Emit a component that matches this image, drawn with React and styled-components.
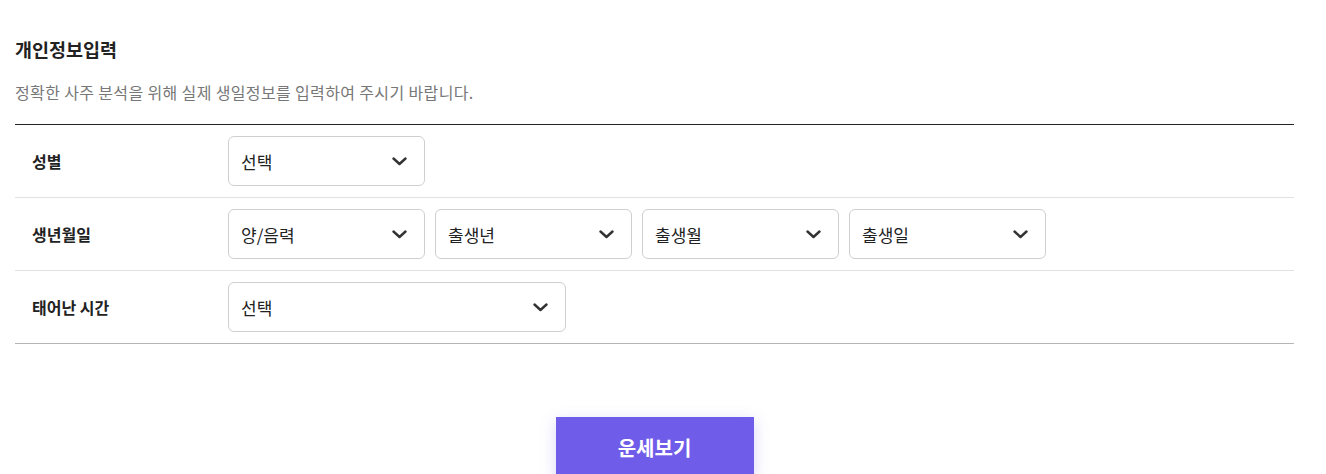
import React from 'react'
import styled, { createGlobalStyle } from 'styled-components'

const GlobalStyle = createGlobalStyle`
  body {
    margin: 0;
    background: #fff;
    font-family: "Noto Sans CJK KR", "Noto Sans", sans-serif;
    color: #222;
  }
`

const Container = styled.div`
  width: 1279px;
  margin-left: 15px;
  padding-top: 36px;
  display: flex;
  flex-direction: column;
`

const Title = styled.h2`
  margin: 0;
  font-size: 18.5px;
  line-height: 27px;
  font-weight: 700;
  color: #222;
`

const Desc = styled.p`
  margin: 18px 0 21px;
  font-size: 16px;
  line-height: 22px;
  letter-spacing: 0.36px;
  color: #777;
`

const Table = styled.div`
  border-top: 1px solid #222;
  border-bottom: 1px solid #b5b5b5;
`

const Row = styled.div`
  display: flex;
  align-items: center;
  min-height: 72px;
  border-top: ${p => (p.first ? 'none' : '1px solid #e2e2e2')};
`

const Label = styled.div`
  width: 213px;
  padding-left: 17px;
  box-sizing: border-box;
  font-size: 16px;
  font-weight: 700;
  color: #222;
`

const Fields = styled.div`
  display: flex;
  gap: 10px;
`

const Select = styled.div`
  width: ${p => p.w || 197}px;
  height: 50px;
  box-sizing: border-box;
  border: 1px solid #cfcfcf;
  border-radius: 6px;
  display: flex;
  align-items: center;
  justify-content: space-between;
  padding: 0 17px 0 12px;
  font-size: 17px;
  color: #222;
  background: #fff;
`

const Chevron = () => (
  <svg width="15" height="9" viewBox="0 0 15 9" fill="none">
    <path d="M1.5 1.5L7.5 7L13.5 1.5" stroke="#333" strokeWidth="2.4" strokeLinecap="round" strokeLinejoin="round" />
  </svg>
)

const Dropdown = ({ text, w }) => (
  <Select w={w}>
    <span>{text}</span>
    <Chevron />
  </Select>
)

const ButtonWrap = styled.div`
  display: flex;
  justify-content: center;
  margin-top: 73px;
`

const Submit = styled.button`
  width: 198px;
  height: 60px;
  border: none;
  background: #6f5ce9;
  color: #fff;
  font-family: inherit;
  font-size: 20px;
  font-weight: 700;
  box-shadow: 0 4px 14px rgba(111, 92, 233, 0.25);
  cursor: pointer;
`

export default function App() {
  return (
    <>
      <GlobalStyle />
      <Container>
        <Title>개인정보입력</Title>
        <Desc>정확한 사주 분석을 위해 실제 생일정보를 입력하여 주시기 바랍니다.</Desc>
        <Table>
          <Row first>
            <Label>성별</Label>
            <Fields>
              <Dropdown text="선택" />
            </Fields>
          </Row>
          <Row>
            <Label>생년월일</Label>
            <Fields>
              <Dropdown text="양/음력" />
              <Dropdown text="출생년" />
              <Dropdown text="출생월" />
              <Dropdown text="출생일" />
            </Fields>
          </Row>
          <Row>
            <Label>태어난 시간</Label>
            <Fields>
              <Dropdown text="선택" w={338} />
            </Fields>
          </Row>
        </Table>
        <ButtonWrap>
          <Submit>운세보기</Submit>
        </ButtonWrap>
      </Container>
    </>
  )
}
